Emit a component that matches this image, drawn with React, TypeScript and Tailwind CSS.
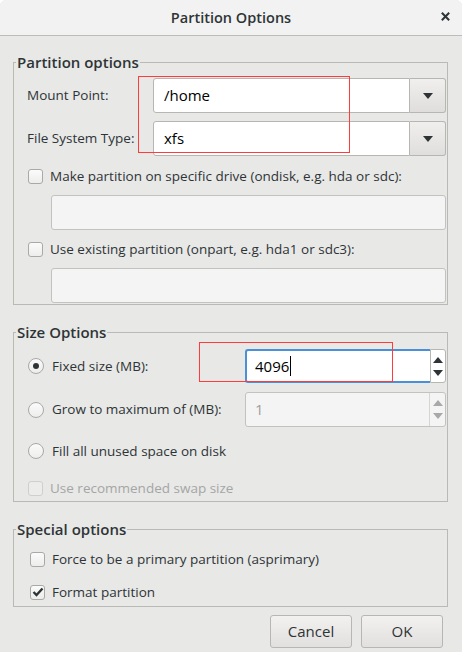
import React from "react"

const font = { fontFamily: '"Open Sans", "DejaVu Sans", sans-serif' }

function Caret({ up = false, dim = false }: { up?: boolean; dim?: boolean }) {
  return (
    <svg width="10" height="6" viewBox="0 0 10 6" className={dim ? "text-[#a8a8a8]" : "text-[#2e3436]"}>
      {up ? <path d="M0 6 L5 0 L10 6 Z" fill="currentColor" /> : <path d="M0 0 L10 0 L5 6 Z" fill="currentColor" />}
    </svg>
  )
}

function Checkbox({ checked = false, disabled = false }: { checked?: boolean; disabled?: boolean }) {
  return (
    <span
      className={`flex size-[15px] shrink-0 items-center justify-center rounded-[3px] border ${
        disabled ? "border-[#cfcfcd] bg-[#ececeb]" : "border-[#a9a9a6] bg-gradient-to-b from-[#fbfbfb] to-[#ededec]"
      }`}
    >
      {checked && (
        <svg width="12" height="10" viewBox="0 0 12 10">
          <path d="M1.5 5 L4.5 8 L10.5 1.5" stroke="#2e3436" strokeWidth="2.4" fill="none" />
        </svg>
      )}
    </span>
  )
}

function Radio({ checked = false }: { checked?: boolean }) {
  return (
    <span className="flex size-[16px] shrink-0 items-center justify-center rounded-full border border-[#a9a9a6] bg-gradient-to-b from-[#fbfbfb] to-[#ededec]">
      {checked && <span className="size-[6px] rounded-full bg-[#2e3436]" />}
    </span>
  )
}

function Combo({ value }: { value: string }) {
  return (
    <div className="flex h-[35px] flex-1">
      <div className="flex flex-1 items-center rounded-l-[3px] border border-[#b6b6b3] bg-white pl-[10px] text-[15px] text-black">
        {value}
      </div>
      <div className="flex w-[36px] items-center justify-center rounded-r-[3px] border border-l-0 border-[#b6b6b3] bg-gradient-to-b from-[#f0efee] to-[#dfdedc]">
        <Caret />
      </div>
    </div>
  )
}

function Frame({ title, children, className = "" }: { title: string; children: React.ReactNode; className?: string }) {
  return (
    <fieldset className={`border border-[#b9b9b6] pl-[12px] pr-[1px] ${className}`}>
      <legend className="-ml-[10px] px-[1px] text-[15px] font-semibold leading-[20px] text-[#2e3436]">{title}</legend>
      {children}
    </fieldset>
  )
}

export default function App() {
  return (
    <div style={font} className="flex h-[652px] w-[462px] flex-col overflow-hidden rounded-t-[6px] bg-[#e8e8e7] text-[13.5px] text-[#2e3436]">
      {/* title bar */}
      <div className="relative flex h-[36px] shrink-0 items-center justify-center border-b border-[#bcbcb9] bg-[#f2f2f2]">
        <span className="text-[14.5px] font-semibold text-[#2e3436]">Partition Options</span>
        <span className="absolute right-[11px] top-[11px]">
          <svg width="11" height="11" viewBox="0 0 12 12">
            <path d="M2 2 L10 10 M10 2 L2 10" stroke="#2e3436" strokeWidth="2.2" />
          </svg>
        </span>
      </div>

      <div className="relative flex flex-col pl-[13px] pr-[14px] pt-[16px]">
        <Frame title="Partition options" className="pb-[1px]">
          <div className="mt-[6px] flex items-center">
            <span className="w-[127px] pl-[1px]">Mount Point:</span>
            <Combo value="/home" />
          </div>
          <div className="mt-[8px] flex items-center">
            <span className="w-[127px] pl-[1px]">File System Type:</span>
            <Combo value="xfs" />
          </div>
          <div className="flex h-[39px] items-center gap-[7px] pl-[2px] pt-[1px]">
            <Checkbox />
            <span>Make partition on specific drive (ondisk, e.g. hda or sdc):</span>
          </div>
          <div className="ml-[25px] h-[35px] rounded-[3px] border border-[#c2c2bf] bg-[#f4f4f4]" />
          <div className="flex h-[38px] items-center gap-[7px] pl-[2px]">
            <Checkbox />
            <span>Use existing partition (onpart, e.g. hda1 or sdc3):</span>
          </div>
          <div className="ml-[25px] h-[35px] rounded-[3px] border border-[#c2c2bf] bg-[#f4f4f4]" />
        </Frame>

        <Frame title="Size Options" className="mt-[17px]">
          <div className="mt-[7px] flex h-[34px] items-center">
            <div className="flex w-[219px] items-center gap-[8px] pl-[2px]">
              <Radio checked />
              <span>Fixed size (MB):</span>
            </div>
            <div className="flex h-[34px] flex-1">
              <div className="flex flex-1 items-center rounded-l-[3px] border-2 border-r-0 border-[#4a90d9] bg-white pl-[8px] text-[15px] text-black">
                4096
                <span className="ml-[1px] h-[20px] w-[1px] bg-black" />
              </div>
              <div className="flex w-[16px] flex-col items-center justify-center gap-[7px] rounded-r-[3px] border border-[#b6b6b3] bg-white">
                <Caret up />
                <Caret />
              </div>
            </div>
          </div>
          <div className="mt-[9px] flex h-[35px] items-center">
            <div className="flex w-[219px] items-center gap-[8px] pl-[2px]">
              <Radio />
              <span>Grow to maximum of (MB):</span>
            </div>
            <div className="flex h-[35px] flex-1 rounded-[3px] border border-[#c2c2bf] bg-[#f4f4f4]">
              <div className="flex flex-1 items-center pl-[9px] text-[15px] text-[#a0a0a0]">1</div>
              <div className="flex w-[16px] flex-col items-center justify-center gap-[7px] border-l border-[#d6d6d4]">
                <Caret up dim />
                <Caret dim />
              </div>
            </div>
          </div>
          <div className="flex h-[48px] items-center gap-[8px] pl-[2px]">
            <Radio />
            <span>Fill all unused space on disk</span>
          </div>
          <div className="flex h-[26px] items-center gap-[7px] pl-[2px] text-[#a4a6a4]">
            <Checkbox disabled />
            <span>Use recommended swap size</span>
          </div>
        </Frame>

        <Frame title="Special options" className="mt-[17px] pb-[1px]">
          <div className="flex h-[40px] items-center gap-[7px] pl-[4px]">
            <Checkbox />
            <span>Force to be a primary partition (asprimary)</span>
          </div>
          <div className="flex h-[26px] items-center gap-[7px] pl-[4px]">
            <Checkbox checked />
            <span>Format partition</span>
          </div>
        </Frame>

        <div className="mt-[8px] flex justify-end gap-[9px] pr-[5px]">
          <button className="h-[33px] w-[82px] rounded-[3px] border border-[#b6b6b3] bg-gradient-to-b from-[#f2f1f0] to-[#e2e0de] text-[15px] text-[#2e3436]">
            Cancel
          </button>
          <button className="h-[33px] w-[82px] rounded-[3px] border border-[#b6b6b3] bg-gradient-to-b from-[#f2f1f0] to-[#e2e0de] text-[15px] text-[#2e3436]">
            OK
          </button>
        </div>

        {/* annotation boxes */}
        <div className="pointer-events-none absolute left-[138px] top-[40px] h-[77px] w-[212px] border border-[#ff3b3b]" />
        <div className="pointer-events-none absolute left-[199px] top-[306px] h-[40px] w-[194px] border border-[#ff3b3b]" />
      </div>
    </div>
  )
}
